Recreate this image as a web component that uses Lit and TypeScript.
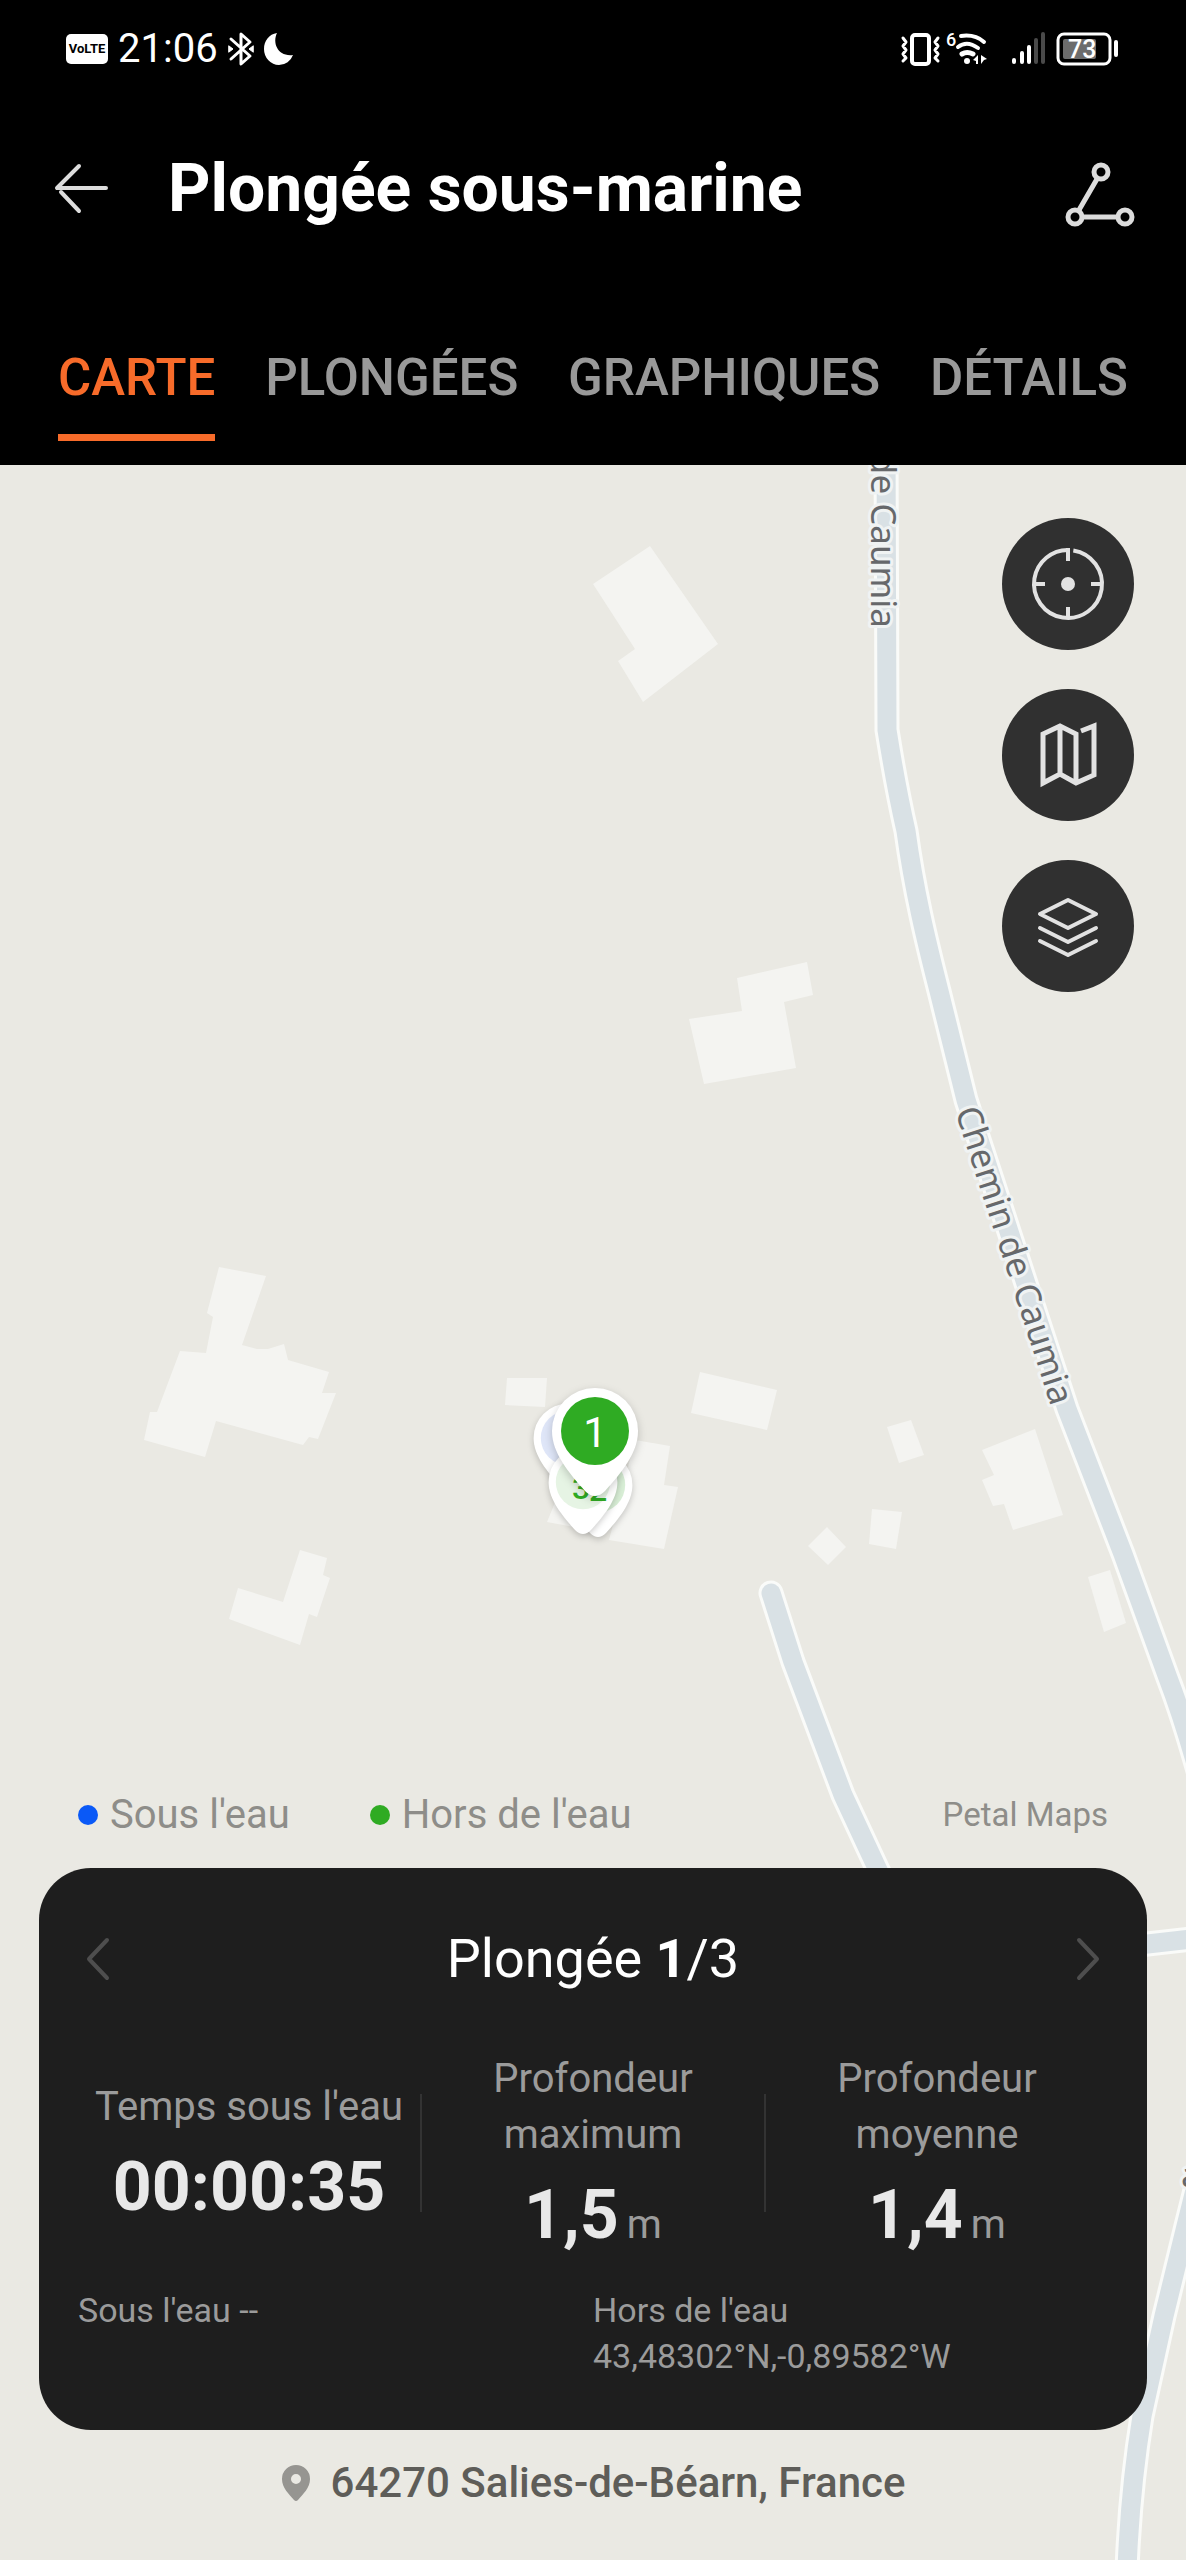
import { LitElement, html, css, svg } from "lit";
import { customElement, property, state } from "lit/decorators.js";

const BUILDINGS = [
  "650,546 718,644 643,702 618,661 635,649 593,584",
  "737,978 807,962 813,995 784,1002 796,1068 704,1084 689,1019 742,1011",
  "219,1267 266,1276 242,1345 257,1349 268,1349 284,1344 288,1360 329,1372 322,1393 336,1393 318,1439 309,1437 303,1445 216,1421 205,1457 144,1440 150,1412 157,1412 180,1351 206,1353 213,1317 207,1313",
  "300,1550 327,1558 323,1575 330,1578 317,1617 309,1614 300,1645 229,1619 238,1588 283,1602",
  "507,1378 547,1378 545,1407 505,1405",
  "700,1372 777,1390 767,1430 691,1413",
  "887,1427 911,1420 924,1455 899,1463",
  "872,1509 902,1512 896,1549 869,1544",
  "827,1527 846,1547 828,1565 808,1546",
  "982,1450 1035,1429 1063,1515 1013,1530 1004,1504 993,1506 982,1480 994,1475",
  "1088,1577 1110,1570 1126,1623 1104,1632",
  "635,1440 670,1446 664,1485 678,1487 664,1549 609,1540",
  "556,1500 580,1506 574,1527 547,1522",
];

const ROADS = [
  "M886 440 L887 730 C893 768 899 800 906 831 C914 890 926 940 939 991 L966 1100 L1067 1409 L1123 1554 L1168 1678 Q1186 1725 1206 1800",
  "M771 1593 L793 1662 L843 1795 L877 1868 L890 1895",
  "M1130 1946 L1200 1938",
  "M1200 2170 L1186 2226 L1164 2316 L1142 2416 Q1130 2490 1127 2570",
];

interface Pin {
  x: number;
  y: number;
  scale: number;
  fill: string;
}

const FADED_PINS: Pin[] = [
  { x: 568, y: 1438, scale: 0.8, fill: "#dfe6f8" },
  { x: 598, y: 1485, scale: 0.8, fill: "#d8eed6" },
  { x: 583, y: 1482, scale: 0.8, fill: "#e6f4e4" },
];

const CURRENT_PIN: Pin = { x: 595, y: 1431, scale: 1, fill: "#2fab23" };

@customElement("dive-map")
export class DiveMap extends LitElement {
  static styles = css`
    :host {
      display: block;
    }
    .canvas {
      display: block;
      width: 100%;
      height: 100%;
    }
    .land {
      fill: #eae9e3;
    }
    .building {
      fill: #f4f4f1;
    }
    .casing {
      fill: none;
      stroke: #fafbf9;
      stroke-width: 25px;
      stroke-linecap: round;
      stroke-linejoin: round;
    }
    .road {
      fill: none;
      stroke: #d9e1e5;
      stroke-width: 19px;
      stroke-linecap: round;
      stroke-linejoin: round;
    }
    .street {
      font: 400 35px "Noto Sans", "Open Sans", sans-serif;
      fill: #66686b;
      stroke: #f0f3f3;
      stroke-width: 6px;
      stroke-linejoin: round;
      paint-order: stroke;
    }
    .pin {
      filter: drop-shadow(0 3px 4px rgba(0, 0, 0, 0.2));
    }
    .shell {
      fill: #ffffff;
    }
    .number {
      font: 400 42px Roboto, sans-serif;
      fill: #ffffff;
      text-anchor: middle;
    }
    .number.faded {
      font-size: 32px;
      font-weight: 500;
      fill: #2fab23;
    }
  `;

  private pin(p: Pin) {
    return svg`
      <g class="pin" transform="translate(${p.x} ${p.y}) scale(${p.scale})">
        <path class="shell" d="M0 -43 A43 43 0 0 1 43 0 C43 22 26 42 10 60 Q0 70 -10 60 C-26 42 -43 22 -43 0 A43 43 0 0 1 0 -43 Z"></path>
        <circle r="34" fill=${p.fill}></circle>
      </g>
    `;
  }

  render() {
    return html`
      <svg class="canvas" viewBox="0 465 1186 2095" preserveAspectRatio="xMidYMax slice" role="img" aria-label="Carte">
        <rect class="land" x="-2000" y="-2000" width="6000" height="7000"></rect>
        ${BUILDINGS.map((p) => svg`<polygon class="building" points=${p}></polygon>`)}
        ${ROADS.map((d) => svg`<path class="casing" d=${d}></path>`)}
        ${ROADS.map((d) => svg`<path class="road" d=${d}></path>`)}
        <text class="street" transform="translate(871 628) rotate(90)" text-anchor="end">de Caumia</text>
        <text class="street" transform="translate(955 1111) rotate(72)">Chemin de Caumia</text>
        <text class="street" transform="translate(1181 2187)">a</text>
        ${FADED_PINS.map((p) => this.pin(p))}
        <text class="number faded" x="581" y="1499">3</text>
        <text class="number faded" x="598" y="1501">2</text>
        ${this.pin(CURRENT_PIN)}
        <text class="number" x=${CURRENT_PIN.x} y=${CURRENT_PIN.y + 16}>1</text>
      </svg>
    `;
  }
}

@customElement("status-bar")
export class StatusBar extends LitElement {
  static styles = css`
    :host {
      display: flex;
      justify-content: space-between;
      align-items: center;
      height: 98px;
      padding: 0 66px;
      color: #ffffff;
      font-family: Roboto, sans-serif;
    }
    .side {
      display: flex;
      align-items: center;
      gap: 10px;
    }
    .volte {
      width: 42px;
      height: 30px;
      border-radius: 5px;
      background: #ffffff;
      color: #000000;
      font: 700 13px/30px Roboto, sans-serif;
      text-align: center;
    }
    .time {
      font-size: 40px;
      line-height: 48px;
    }
    .icon {
      display: block;
      overflow: visible;
    }
    .six {
      font: 500 18px Roboto, sans-serif;
    }
    .level {
      font: 500 25px Roboto, sans-serif;
    }
  `;

  render() {
    return html`
      <div class="side">
        <span class="volte">VoLTE</span>
        <time class="time">21:06</time>
        <svg class="icon" width="26" height="36" viewBox="0 0 26 36" fill="none" stroke="#fff" stroke-width="3" stroke-linejoin="round" stroke-linecap="round">
          <path d="M3 8 L22 25 L13 33 V3 L22 11 L3 28"></path>
          <path d="M1 15 L5 18 L1 21 Z M25 15 L21 18 L25 21 Z" fill="#fff" stroke-width="1"></path>
        </svg>
        <svg class="icon" width="30" height="32" viewBox="0 0 30 32" fill="#fff">
          <path d="M13 0 C8 10 14 24 29 22 A15 15 0 0 1 15 32 A15 16 0 0 1 0 16 C0 8 5 1 13 0 Z"></path>
        </svg>
      </div>
      <svg class="icon" width="220" height="36" viewBox="901 31 220 36" fill="none" stroke="#fff" stroke-linecap="round" stroke-linejoin="round">
        <rect x="913" y="35" width="17" height="29" rx="3" stroke-width="4"></rect>
        <path d="M904 39 l3 4 l-3 4 l3 4 l-3 4 l3 4 l-3 3 M939 39 l-3 4 l3 4 l-3 4 l3 4 l-3 4 l3 3" transform="translate(0 -1)" stroke-width="3"></path>
        <text class="six" x="947" y="46" fill="#fff" stroke="none">6</text>
        <path d="M962 36 Q976 34 985 42 M959 47 Q968 40 979 48" stroke-width="4"></path>
        <path d="M963 54 Q968 51 974 54" stroke-width="5"></path>
        <circle cx="968" cy="61" r="3" fill="#fff" stroke="none"></circle>
        <path d="M974 60 l5 -5 v9 h-2 v-3 Z M982 55 l6 4 l-3 1 l-3 4 Z" fill="#fff" stroke="none"></path>
        <g stroke-width="4">
          <path d="M1015 60 V62 M1023 53 V62 M1030 47 V62"></path>
          <path d="M1037 40 V62 M1044 34 V62" stroke="#4a4a4a"></path>
          <path d="M1117 42 V55"></path>
        </g>
        <rect x="1059" y="34" width="52" height="30" rx="6" stroke-width="3"></rect>
        <rect x="1064" y="39" width="33" height="20" rx="2" fill="#6c6c6c" stroke="none"></rect>
        <text class="level" x="1069" y="58" fill="#fff" stroke="none">73</text>
      </svg>
    `;
  }
}

@customElement("dive-stat")
export class DiveStat extends LitElement {
  @property() label = "";
  @property() value = "";
  @property() unit = "";

  static styles = css`
    :host {
      display: flex;
      flex-direction: column;
      justify-content: center;
      align-items: center;
      gap: 12px;
      text-align: center;
    }
    .label {
      color: #9b9b9b;
      font-size: 40px;
      line-height: 56px;
      white-space: pre-line;
    }
    .value {
      color: #e8e8e8;
      font-size: 68px;
      line-height: 80px;
      font-weight: 700;
    }
    .unit {
      margin-left: 8px;
      color: #9b9b9b;
      font-size: 40px;
      line-height: 40px;
      font-weight: 400;
    }
  `;

  render() {
    return html`
      <div class="label">${this.label}</div>
      <div class="value">${this.value}${this.unit ? html`<span class="unit">${this.unit}</span>` : ""}</div>
    `;
  }
}

@customElement("app-root")
export class AppRoot extends LitElement {
  @state() private tab = 0;

  private tabs = ["CARTE", "PLONGÉES", "GRAPHIQUES", "DÉTAILS"];

  static styles = css`
    :host {
      display: block;
      font-family: Roboto, "Noto Sans", sans-serif;
    }
    * {
      box-sizing: border-box;
    }
    button {
      margin: 0;
      padding: 0;
      border: 0;
      background: none;
      font: inherit;
      cursor: pointer;
    }
    .page {
      display: flex;
      flex-direction: column;
      min-height: 100vh;
    }
    .header {
      background: #000000;
      color: #ffffff;
    }
    .bar {
      display: flex;
      align-items: center;
      height: 182px;
      padding: 0 50px;
    }
    .title {
      flex: 1;
      margin: 0 0 0 52px;
      font-size: 66px;
      line-height: 80px;
      font-weight: 700;
    }
    .icon {
      display: block;
      overflow: visible;
    }
    .tabs {
      display: flex;
      justify-content: space-between;
      padding: 68px 58px 24px;
    }
    .tab {
      padding-bottom: 26px;
      border-bottom: 7px solid transparent;
      color: #999999;
      font-size: 51px;
      line-height: 60px;
      font-weight: 500;
    }
    .tab.active {
      border-bottom-color: #f76b2a;
      color: #f76b2a;
    }
    .map {
      position: relative;
      display: flex;
      flex: 1;
      flex-direction: column;
      overflow: hidden;
      background: #eae9e3;
    }
    .backdrop {
      position: absolute;
      inset: 0;
    }
    .tools {
      position: relative;
      display: flex;
      flex-direction: column;
      align-items: flex-end;
      gap: 39px;
      padding: 53px 52px;
    }
    .tool {
      display: grid;
      place-items: center;
      width: 132px;
      height: 132px;
      border-radius: 50%;
      background: #303030;
    }
    .sheet {
      position: relative;
      margin-top: auto;
      padding: 0 39px 49px;
    }
    .legend {
      display: flex;
      align-items: center;
      gap: 80px;
      margin-bottom: 25px;
      padding: 0 39px;
      color: #8e8d89;
      font-size: 40px;
      line-height: 56px;
    }
    .key {
      display: flex;
      align-items: center;
      gap: 12px;
    }
    .dot {
      width: 20px;
      height: 20px;
      border-radius: 50%;
    }
    .dot.under {
      background: #0a59f7;
    }
    .dot.above {
      background: #2fab23;
    }
    .credit {
      margin-left: auto;
      font-size: 33px;
    }
    .card {
      padding: 61px 39px 51px;
      border-radius: 52px;
      background: #1e1e1e;
    }
    .pager {
      display: flex;
      justify-content: space-between;
      align-items: center;
      color: #ffffff;
    }
    .heading {
      margin: 0;
      font-size: 54px;
      line-height: 60px;
      font-weight: 400;
    }
    .stats {
      display: grid;
      grid-template-columns: 1fr auto 1fr auto 1fr;
      align-items: center;
      margin-top: 62px;
    }
    .rule {
      width: 2px;
      height: 118px;
      background: #333333;
    }
    .places {
      display: grid;
      grid-template-columns: 1fr 1fr;
      margin-top: 32px;
      color: #9b9b9b;
      font-size: 34px;
      line-height: 46px;
    }
    .address {
      display: flex;
      justify-content: center;
      align-items: center;
      gap: 20px;
      margin-top: 25px;
      color: #5e5d59;
      font-size: 42px;
      line-height: 56px;
      font-weight: 500;
    }
  `;

  private chevron(d: string) {
    return html`<svg class="icon" width="34" height="44" viewBox="0 0 34 44" fill="none" stroke="#4e4e4e" stroke-width="4" stroke-linecap="round" stroke-linejoin="round"><path d=${d}></path></svg>`;
  }

  render() {
    return html`
      <div class="page">
        <header class="header">
          <status-bar></status-bar>
          <div class="bar">
            <button class="back" aria-label="Retour">
              <svg class="icon" width="66" height="54" viewBox="0 0 66 54" fill="none" stroke="#ddd" stroke-width="4" stroke-linecap="round">
                <path d="M29 4 L7 26 H56 M11 30 L29 49" stroke-linejoin="round"></path>
              </svg>
            </button>
            <h1 class="title">Plongée sous-marine</h1>
            <button class="share" aria-label="Itinéraire">
              <svg class="icon" width="72" height="70" viewBox="0 -10 72 70" fill="none" stroke="#dcdcdc" stroke-width="5">
                <circle cx="37" cy="8" r="7"></circle>
                <circle cx="11" cy="53" r="7"></circle>
                <circle cx="61" cy="53" r="7"></circle>
                <path d="M33 15 L15 46 M18 53 H54"></path>
              </svg>
            </button>
          </div>
          <nav class="tabs">
            ${this.tabs.map(
              (name, i) => html`<button class="tab ${i === this.tab ? "active" : ""}" @click=${() => (this.tab = i)}>${name}</button>`
            )}
          </nav>
        </header>
        <main class="map">
          <dive-map class="backdrop"></dive-map>
          <div class="tools">
            <button class="tool" aria-label="Centrer">
              <svg class="icon" width="80" height="80" viewBox="-40 -40 80 80" fill="none" stroke="#e2e2e2" stroke-width="4">
                <circle r="34" stroke-dasharray="209 5" transform="rotate(-81)"></circle>
                <path d="M0 -36 V-23 M-34 0 H-23 M34 0 H23 M0 34 V23"></path>
                <circle r="7" fill="#e2e2e2" stroke="none"></circle>
              </svg>
            </button>
            <button class="tool" aria-label="Type de carte">
              <svg class="icon" width="80" height="80" viewBox="-40 -40 80 80" fill="none" stroke="#e2e2e2" stroke-width="5">
                <path d="M13 -24 L26 -29 V20 L8 28 L-8 19 L-25 28 V-21 L-8 -29 L8 -21 V28 M-8 -29 V19"></path>
              </svg>
            </button>
            <button class="tool" aria-label="Calques">
              <svg class="icon" width="80" height="80" viewBox="-40 -40 80 80" fill="none" stroke="#e2e2e2" stroke-width="4" stroke-linecap="round" stroke-linejoin="round">
                <path d="M0 -26 L28 -12 L0 2 L-28 -12 Z M-28 2 L0 16 L28 2 M-28 15 L0 29 L28 15"></path>
              </svg>
            </button>
          </div>
          <section class="sheet">
            <div class="legend">
              <span class="key"><span class="dot under"></span>Sous l'eau</span>
              <span class="key"><span class="dot above"></span>Hors de l'eau</span>
              <span class="credit">Petal Maps</span>
            </div>
            <article class="card">
              <div class="pager">
                <button aria-label="Plongée précédente">${this.chevron("M29 3 L11 22 L29 41")}</button>
                <h2 class="heading">Plongée <b>1</b>/3</h2>
                <button aria-label="Plongée suivante">${this.chevron("M5 3 L23 22 L5 41")}</button>
              </div>
              <div class="stats">
                <dive-stat label="Temps sous l'eau" value="00:00:35"></dive-stat>
                <span class="rule"></span>
                <dive-stat label=${"Profondeur\nmaximum"} value="1,5" unit="m"></dive-stat>
                <span class="rule"></span>
                <dive-stat label=${"Profondeur\nmoyenne"} value="1,4" unit="m"></dive-stat>
              </div>
              <div class="places">
                <div>Sous l'eau --</div>
                <div>Hors de l'eau<br />43,48302°N,-0,89582°W</div>
              </div>
            </article>
            <div class="address">
              <svg class="icon" width="30" height="36" viewBox="0 0 30 36" fill="#969591">
                <path fill-rule="evenodd" d="M15 0 A14 14 0 0 1 29 14 C29 23 22 29 17 35 Q15 37 13 35 C8 29 1 23 1 14 A14 14 0 0 1 15 0 Z M15 9 A5 5 0 1 0 15 19 A5 5 0 1 0 15 9 Z"></path>
              </svg>
              <span>64270 Salies-de-Béarn, France</span>
            </div>
          </section>
        </main>
      </div>
    `;
  }
}
